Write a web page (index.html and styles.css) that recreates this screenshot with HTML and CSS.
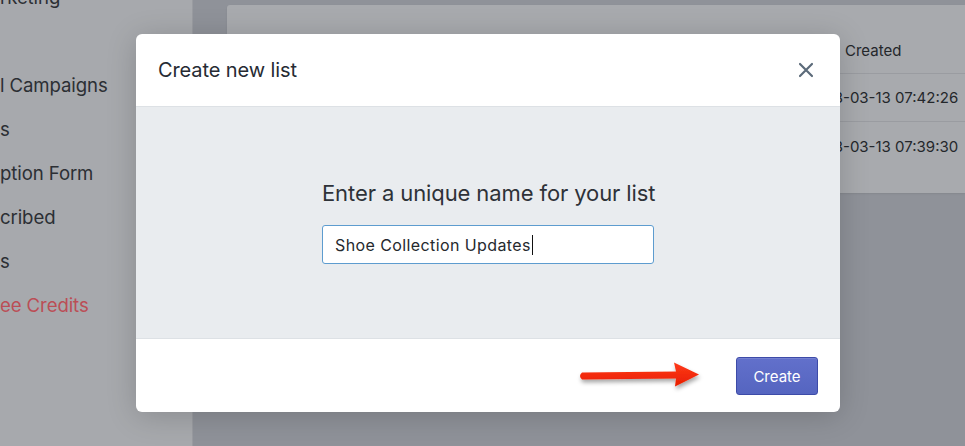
FILE: index.html
```html
<!DOCTYPE html>
<html>
<head>
<meta charset="utf-8">
<link rel="stylesheet" href="styles.css">
</head>
<body>
<div class="app">
  <aside class="sidebar">
    <div class="nav-item first">rketing</div>
    <div class="nav-item"></div>
    <div class="nav-item">l Campaigns</div>
    <div class="nav-item">s</div>
    <div class="nav-item">ption Form</div>
    <div class="nav-item">cribed</div>
    <div class="nav-item">s</div>
    <div class="nav-item red">ee Credits</div>
  </aside>
  <main class="main">
    <section class="card">
      <div class="card-top"></div>
      <div class="row head"><span class="cell-created">Created</span></div>
      <div class="row"><span class="cell-date">2018-03-13 07:42:26</span></div>
      <div class="row last"><span class="cell-date">2018-03-13 07:39:30</span></div>
    </section>
  </main>
</div>

<div class="overlay">
  <div class="modal">
    <div class="modal-header">
      <h2 class="modal-title">Create new list</h2>
      <span class="close">
        <svg width="16" height="16" viewBox="0 0 16 16"><path d="M2 2 L14 14 M14 2 L2 14" stroke="#5c6b7a" stroke-width="2.2" stroke-linecap="round" fill="none"/></svg>
      </span>
    </div>
    <div class="modal-body">
      <div class="field">
        <label class="field-label">Enter a unique name for your list</label>
        <div class="input"><span>Shoe Collection Updates</span><span class="caret"></span></div>
      </div>
    </div>
    <div class="modal-footer">
      <svg class="arrow" width="130" height="36" viewBox="0 0 130 36">
        <defs>
          <filter id="sh" x="-10%" y="-30%" width="120%" height="180%">
            <feDropShadow dx="1" dy="3" stdDeviation="2" flood-color="#000" flood-opacity="0.35"/>
          </filter>
          <linearGradient id="rg" x1="0" y1="0" x2="0" y2="1">
            <stop offset="0" stop-color="#ff3a1a"/>
            <stop offset="1" stop-color="#e81e00"/>
          </linearGradient>
        </defs>
        <path filter="url(#sh)" fill="url(#rg)" d="M6 13.5 L100 12.5 L98 3.5 L123 15.5 L99 27.5 L100 19.5 L6 20.5 Q2 17 6 13.5 Z"/>
      </svg>
      <button class="btn-primary">Create</button>
    </div>
  </div>
</div>
</body>
</html>
```

FILE: styles.css
```css
* { box-sizing: border-box; }
html, body { margin: 0; padding: 0; }
body {
  width: 965px;
  height: 446px;
  overflow: hidden;
  font-family: Inter, "Noto Sans", sans-serif;
  background: #8f9299;
  position: relative;
}
.app {
  display: flex;
  height: 446px;
}
.sidebar {
  width: 193px;
  flex: none;
  background: #a7a9ad;
  border-right: 1px solid #9a9ca1;
  display: flex;
  flex-direction: column;
  overflow: hidden;
}
.nav-item {
  height: 44px;
  line-height: 44px;
  font-size: 18.6px;
  color: #2c2f34;
  white-space: nowrap;
  letter-spacing: -0.1px;
}
.nav-item.first { margin-top: -25px; }
.nav-item.red { color: #bb4e56; }
.main {
  flex: 1;
  padding: 5px 0 0 34px;
}
.card {
  background: #a8aaae;
  height: 188px;
  border-radius: 3px 0 0 3px;
  box-shadow: 0 1px 2px rgba(0,0,0,0.08);
}
.card-top { height: 22px; }
.row {
  height: 48px;
  display: flex;
  align-items: center;
  border-bottom: 1px solid #9a9ca1;
  font-size: 15px;
  color: #24272b;
}
.row.head { height: 47px; }
.row.last { border-bottom: none; }
.cell-created { margin-left: 618px; }
.cell-date { margin-left: 582px; }

.overlay {
  position: absolute;
  inset: 0;
}
.modal {
  position: absolute;
  left: 136px;
  top: 34px;
  width: 704px;
  height: 378px;
  background: #fff;
  border-radius: 6px;
  overflow: hidden;
  box-shadow: 0 4px 30px rgba(0,0,0,0.18);
  display: flex;
  flex-direction: column;
}
.modal-header {
  height: 73px;
  flex: none;
  display: flex;
  align-items: center;
  justify-content: space-between;
  padding: 0 26px 0 22px;
  border-bottom: 1px solid #dde1e5;
}
.modal-title {
  margin: 0;
  font-size: 20px;
  font-weight: 400;
  color: #262b33;
  letter-spacing: -0.1px;
}
.close { display: flex; width: 16px; height: 16px; }
.modal-body {
  height: 232px;
  flex: none;
  background: #e9ecef;
  border-bottom: 1px solid #dde1e5;
  display: flex;
  justify-content: center;
  padding-top: 72px;
}
.field {
  width: 332px;
  display: flex;
  flex-direction: column;
}
.field-label {
  font-size: 22px;
  color: #2e3238;
  line-height: 28px;
  white-space: nowrap;
  letter-spacing: -0.1px;
}
.input {
  margin-top: 18px;
  height: 39px;
  background: #fff;
  border: 1px solid #5d9ccf;
  border-radius: 3px;
  display: flex;
  align-items: center;
  padding-left: 12px;
  font-size: 16px;
  letter-spacing: 0.4px;
  color: #25292e;
}
.caret {
  display: inline-block;
  width: 1px;
  height: 20px;
  background: #111;
  margin-left: 1px;
}
.modal-footer {
  flex: 1;
  display: flex;
  align-items: center;
  justify-content: flex-end;
  padding-right: 22px;
}
.arrow { margin-right: 30px; margin-top: 2px; }
.btn-primary {
  width: 82px;
  height: 38px;
  background: linear-gradient(#6270cb, #5565c0);
  border: 1px solid #3d4ba8;
  border-radius: 3px;
  color: #fff;
  font-family: Inter, "Noto Sans", sans-serif;
  font-size: 15px;
  padding-top: 2px;
  box-shadow: inset 0 1px 0 rgba(255,255,255,0.12);
}
```
